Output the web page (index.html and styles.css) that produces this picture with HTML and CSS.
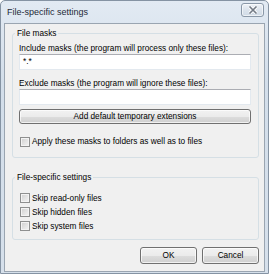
FILE: index.html
```html
<!DOCTYPE html>
<html>
<head>
<meta charset="utf-8">
<link rel="stylesheet" href="styles.css">
</head>
<body>
<div class="window">
  <div class="titlebar">
    <span class="title">File-specific settings</span>
    <span class="close">
      <svg width="10" height="8" viewBox="0 0 10 8"><path d="M1.5 0.5 L8.5 7.5 M8.5 0.5 L1.5 7.5" stroke="#ffffff" stroke-width="3.2" fill="none"/><path d="M1.5 0.5 L8.5 7.5 M8.5 0.5 L1.5 7.5" stroke="#737b86" stroke-width="1.6" fill="none"/></svg>
    </span>
  </div>
  <div class="client">
    <fieldset class="group g1">
      <legend>File masks</legend>
      <div class="label">Include masks (the program will process only these files):</div>
      <div class="input">*.*</div>
      <div class="label l2">Exclude masks (the program will ignore these files):</div>
      <div class="input"></div>
      <div class="btn wide">Add default temporary extensions</div>
      <label class="check apply"><span class="box"></span>Apply these masks to folders as well as to files</label>
    </fieldset>
    <fieldset class="group g2">
      <legend>File-specific settings</legend>
      <label class="check"><span class="box"></span>Skip read-only files</label>
      <label class="check"><span class="box"></span>Skip hidden files</label>
      <label class="check"><span class="box"></span>Skip system files</label>
    </fieldset>
    <div class="actions">
      <div class="btn small">OK</div>
      <div class="btn small">Cancel</div>
    </div>
  </div>
</div>
</body>
</html>
```

FILE: styles.css
```css
html, body {
  margin: 0;
  padding: 0;
  background: #ffffff;
}
body {
  font-family: "Liberation Sans", Arial, sans-serif;
  font-size: 8.25px;
  color: #000000;
}
.window {
  box-sizing: border-box;
  width: 269px;
  height: 274px;
  border: 1px solid #8593a3;
  border-radius: 5px 5px 0 0;
  background: linear-gradient(#e2eaf3, #d3deea 30%, #d6e0eb);
  display: flex;
  flex-direction: column;
}
.titlebar {
  height: 22px;
  display: flex;
  align-items: center;
  justify-content: space-between;
  padding: 0 4px 0 6px;
}
.title {
  font-size: 9px;
  color: #1e2a38;
  margin-top: -1px;
}
.close {
  box-sizing: border-box;
  width: 23px;
  height: 14px;
  margin-top: -4px;
  border: 1px solid #8a98a8;
  border-radius: 3px;
  background: linear-gradient(#eef2f7, #dbe3ec 50%, #d0dae6);
  box-shadow: inset 0 0 0 1px rgba(255,255,255,0.6);
  display: flex;
  align-items: center;
  justify-content: center;
}
.client {
  flex: 1;
  margin: 0 3px 1px 3px;
  border: 1px solid #9aa5b1;
  background: #f0f0f0;
  display: flex;
  flex-direction: column;
}
.group {
  margin: 0 5px 0 7px;
  border: 1px solid #d5dfe5;
  border-radius: 3px;
  min-inline-size: 0;
}
.group legend {
  padding: 0 2px;
  margin-left: -4px;
  line-height: 11px;
}
.g1 {
  margin-top: 4px;
  padding: 5px 7px 9px 6px;
}
.g2 {
  margin-top: 14px;
  padding: 8px 7px 6px 6px;
}
.label {
  line-height: 10px;
  white-space: nowrap;
}
.l2 {
  margin-top: 9px;
}
.input {
  box-sizing: border-box;
  height: 16px;
  background: #ffffff;
  border: 1px solid #e3e9ef;
  border-top-color: #abadb3;
  padding-left: 3px;
  line-height: 14px;
}
.btn {
  box-sizing: border-box;
  border: 1px solid #707070;
  border-radius: 3px;
  background: linear-gradient(#f2f2f2, #ebebeb 50%, #dddddd 51%, #cfcfcf);
  box-shadow: inset 0 0 0 1px rgba(255,255,255,0.7);
  display: flex;
  align-items: center;
  justify-content: center;
}
.wide {
  height: 15px;
  margin-top: 4px;
}
.check {
  display: flex;
  align-items: center;
  height: 14px;
  white-space: nowrap;
}
.apply {
  margin-top: 11px;
  height: 13px;
}
.box {
  box-sizing: border-box;
  width: 10px;
  height: 10px;
  margin: 0 2px 0 1px;
  border: 1px solid #8e8f8f;
  background: linear-gradient(135deg, #cfcfcf, #f5f5f5);
  box-shadow: inset 0 0 0 1px #f3f3f3;
}
.actions {
  display: flex;
  justify-content: flex-end;
  gap: 5px;
  margin: 7px 5px 0 0;
}
.small {
  width: 57px;
  height: 17px;
}
```
